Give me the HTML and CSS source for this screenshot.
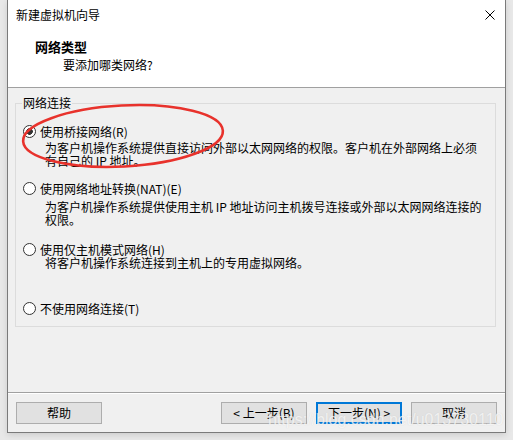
FILE: index.html
```html
<!DOCTYPE html>
<html lang="zh-CN">
<head>
<meta charset="utf-8">
<title>新建虚拟机向导</title>
<link rel="stylesheet" href="styles.css">
</head>
<body>
<div class="window">
  <div class="titlebar">
    <span class="title">新建虚拟机向导</span>
    <svg class="close" width="10" height="10" viewBox="0 0 10 10"><path d="M0.5 0.5L9.5 9.5M9.5 0.5L0.5 9.5" stroke="#000" stroke-width="1" fill="none"/></svg>
  </div>
  <div class="header">
    <div class="h-title">网络类型</div>
    <div class="h-sub">要添加哪类网络?</div>
  </div>
  <div class="body">
    <fieldset class="group">
      <legend class="legend">网络连接</legend>
      <div class="opt opt1">
        <div class="row"><span class="radio checked"></span><span>使用桥接网络(R)</span></div>
        <div class="desc d1">为客户机操作系统提供直接访问外部以太网网络的权限。客户机在外部网络上必须<br>有自己的 IP 地址。</div>
      </div>
      <div class="opt opt2">
        <div class="row"><span class="radio"></span><span>使用网络地址转换(NAT)(E)</span></div>
        <div class="desc d2">为客户机操作系统提供使用主机 IP 地址访问主机拨号连接或外部以太网网络连接的<br>权限。</div>
      </div>
      <div class="opt opt3">
        <div class="row"><span class="radio"></span><span>使用仅主机模式网络(H)</span></div>
        <div class="desc d3">将客户机操作系统连接到主机上的专用虚拟网络。</div>
      </div>
      <div class="opt opt4">
        <div class="row"><span class="radio"></span><span>不使用网络连接(T)</span></div>
      </div>
    </fieldset>
    <div class="spacer"></div>
    <div class="sep"></div>
    <div class="footer">
      <button class="btn">帮助</button>
      <div class="spacer"></div>
      <div class="btns">
        <button class="btn">&lt; 上一步(B)</button>
        <button class="btn default">下一步(N) &gt;</button>
        <button class="btn">取消</button>
      </div>
    </div>
  </div>
</div>
<svg class="annot" width="513" height="440" viewBox="0 0 513 440">
  <ellipse cx="123" cy="136" rx="100" ry="30.5" transform="rotate(-3 123 136)" fill="none" stroke="#e8322c" stroke-width="2.6"/>
</svg>
<div class="watermark">https://blog.csdn.net/u013730110</div>
</body>
</html>
```
FILE: styles.css
```css
html, body {
  margin: 0;
  padding: 0;
}
body {
  width: 513px;
  height: 440px;
  background: #e8e8e8;
  font-family: "Noto Sans CJK SC", "Microsoft YaHei", sans-serif;
  font-size: 12px;
  color: #000;
  position: relative;
  overflow: hidden;
}
.window {
  margin-left: 7px;
  width: 497px;
  height: 432px;
  border: 1px solid #7a7a7a;
  border-top: none;
  background: #f0f0f0;
  display: flex;
  flex-direction: column;
  box-shadow: 0 2px 6px rgba(0,0,0,0.12);
}
.titlebar {
  height: 30px;
  background: #fff;
  display: flex;
  align-items: center;
  justify-content: space-between;
  padding: 0 10px 0 8px;
  flex: none;
}
.title {
  line-height: 16px;
}
.close {
  display: block;
}
.header {
  height: 57px;
  background: #fff;
  border-bottom: 1px solid #a0a0a0;
  padding-top: 9px;
  box-sizing: border-box;
  height: 58px;
  flex: none;
}
.h-title {
  font-weight: bold;
  font-size: 13px;
  line-height: 16px;
  padding-left: 27px;
}
.h-sub {
  line-height: 16px;
  margin-top: 2px;
  padding-left: 55px;
}
.body {
  flex: 1;
  display: flex;
  flex-direction: column;
}
.group {
  margin: 9px 9px 0 7px;
  padding: 0;
  border: 1px solid #dcdcdc;
  min-width: 0;
}
.legend {
  margin-left: 6px;
  padding: 0 1px;
  line-height: 12px;
  height: 12px;
}
.opt {
  white-space: nowrap;
}
.row {
  display: flex;
  align-items: center;
  gap: 4px;
  padding-left: 7px;
  line-height: 13px;
  height: 13px;
}
.radio {
  width: 13px;
  height: 13px;
  box-sizing: border-box;
  border: 1px solid #333;
  border-radius: 50%;
  background: #fff;
  flex: none;
}
.radio.checked {
  background: radial-gradient(circle at center, #333 0 3px, #fff 3.6px);
}
.desc {
  padding-left: 29px;
  line-height: 13px;
}
.opt1 { margin-top: 16px; }
.d1 { margin-top: 3px; }
.opt2 { margin-top: 15px; }
.d2 { margin-top: 5px; }
.opt3 { margin-top: 17px; }
.d3 { margin-top: 0; }
.opt4 { margin-top: 33px; margin-bottom: 11px; }
.spacer {
  flex: 1;
}
.sep {
  height: 0;
  border-top: 1px solid #a0a0a0;
  border-bottom: 1px solid #fff;
  flex: none;
}
.footer {
  display: flex;
  padding: 8px 8px 8px 8px;
  flex: none;
}
.btns {
  display: flex;
  gap: 9px;
}
.btn {
  width: 86px;
  height: 22px;
  box-sizing: border-box;
  border: 1px solid #adadad;
  background: #e1e1e1;
  font-family: "Noto Sans CJK SC", "Microsoft YaHei", sans-serif;
  font-size: 12px;
  line-height: 18px;
  color: #000;
  padding: 0;
  margin: 0;
}
.btn.default {
  border: 2px solid #0078d7;
}
.annot {
  position: absolute;
  left: 0;
  top: 0;
  pointer-events: none;
}
.watermark {
  position: absolute;
  left: 268px;
  top: 410px;
  font-family: "Liberation Sans", Arial, sans-serif;
  font-size: 16px;
  line-height: 20px;
  color: rgba(255,255,255,0.72);
  text-shadow: 0 0 1px rgba(160,160,160,0.35);
  white-space: nowrap;
}
```
